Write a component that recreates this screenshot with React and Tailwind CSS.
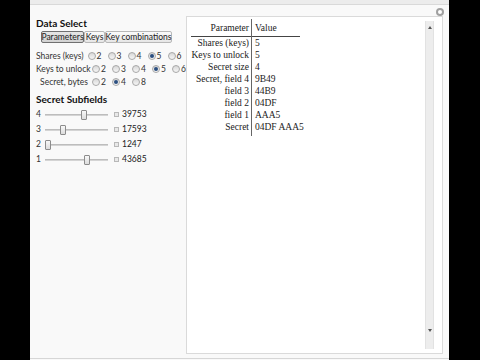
import React from "react";

const sans = { fontFamily: 'Lato, "Liberation Sans", sans-serif' };
const serif = { fontFamily: '"Liberation Serif", "Times New Roman", serif' };

const RADIOS = [
  { label: "Shares (keys)", opts: ["2", "3", "4", "5", "6"], sel: "5" },
  { label: "Keys to unlock", opts: ["2", "3", "4", "5", "6"], sel: "5" },
  { label: "Secret, bytes", opts: ["2", "4", "8"], sel: "4" },
];

const SLIDERS = [
  { label: "4", pos: 36, value: "39753" },
  { label: "3", pos: 15, value: "17593" },
  { label: "2", pos: 0, value: "1247" },
  { label: "1", pos: 39, value: "43685" },
];

const ROWS = [
  ["Shares (keys)", "5"],
  ["Keys to unlock", "5"],
  ["Secret size", "4"],
  ["Secret, field 4", "9B49"],
  ["field 3", "44B9"],
  ["field 2", "04DF"],
  ["field 1", "AAA5"],
  ["Secret", "04DF AAA5"],
];

function Radio({ on }) {
  return (
    <span className="w-[8px] h-[8px] shrink-0 rounded-full border border-[#a8a8a8] bg-gradient-to-b from-[#d8d8d8] to-[#f6f6f6] flex items-center justify-center">
      {on && <span className="w-[4px] h-[4px] rounded-full bg-[#2b4f80]" />}
    </span>
  );
}

function Slider({ label, pos, value }) {
  return (
    <div className="flex items-center h-[15px]">
      <span className="w-[9px] text-[8.5px] text-[#333]">{label}</span>
      <div className="relative w-[63px] h-[10px] flex items-center">
        <div className="w-full h-[2px] bg-[#d4d4d4] border-t border-[#bdbdbd]" />
        <div
          className="absolute top-0 w-[6px] h-[10px] rounded-[1px] border border-[#8c8c8c] bg-gradient-to-b from-[#f8f8f8] to-[#dcdcdc]"
          style={{ left: pos }}
        />
      </div>
      <span className="ml-[6px] w-[5px] h-[5px] border border-[#b8b8b8] bg-[#e8e8e8]" />
      <span className="ml-[3px] text-[8.5px] text-[#222]">{value}</span>
    </div>
  );
}

export default function App() {
  return (
    <div className="w-[480px] h-[360px] bg-black flex overflow-hidden">
      <div className="ml-[30px] w-[419px] h-full bg-[#f9f9f9] flex flex-col relative">
        <div className="h-[5px] bg-[#ececec] border-b border-[#d9d9d9]" />
        <span className="absolute top-[8px] right-[5px] w-[8px] h-[8px] rounded-full border-2 border-[#a0a0a0] bg-white" />
        <div className="flex flex-1 pt-[11px] pb-[4px] pr-[6px]">
          <div className="w-[156px] pl-[6px] pt-[1px]" style={sans}>
            <div className="text-[10px] font-bold text-[#111] leading-[12px]">Data Select</div>
            <div className="flex ml-[5px] mt-[2px] text-[8.5px] text-[#222] whitespace-nowrap">
              <span className="w-[43px] h-[12px] flex items-center justify-center border border-[#707070] bg-gradient-to-b from-[#e6e6e6] to-[#d2d2d2] rounded-[2px]">Parameters</span>
              <span className="w-[21px] h-[12px] flex items-center justify-center border border-[#b8b8b8] bg-gradient-to-b from-[#fbfbfb] to-[#e6e6e6] rounded-[2px]">Keys</span>
              <span className="w-[67px] h-[12px] flex items-center justify-center border border-[#b8b8b8] bg-gradient-to-b from-[#fbfbfb] to-[#e6e6e6] rounded-[2px]">Key combinations</span>
            </div>
            <div className="mt-[7px] flex flex-col gap-[1px]">
              {RADIOS.map((r) => (
                <div key={r.label} className="flex items-center h-[12px] text-[8.5px] text-[#333]">
                  <span className="w-[52px] text-right whitespace-nowrap">{r.label}</span>
                  <div className="flex ml-[4px]">
                    {r.opts.map((o) => (
                      <span key={o} className="w-[20px] flex items-center gap-[1px]">
                        <Radio on={o === r.sel} />
                        <span>{o}</span>
                      </span>
                    ))}
                  </div>
                </div>
              ))}
            </div>
            <div className="mt-[5px] text-[10px] font-bold text-[#111] leading-[12px]">Secret Subfields</div>
            <div className="mt-[2px] flex flex-col">
              {SLIDERS.map((s) => (
                <Slider key={s.label} {...s} />
              ))}
            </div>
          </div>
          <div className="flex-1 bg-white border border-[#dadada] flex justify-between">
            <div className="pl-[5px] pt-[2px]" style={serif}>
              <div className="flex text-[9.5px] leading-[12px] text-[#222]">
                <div className="flex flex-col items-end w-[60px] pr-[2px] border-r border-[#666]">
                  <span className="pb-[2px] pt-[3px]">Parameter</span>
                  <span className="w-[60px] border-t border-[#444] -mr-[2px]" />
                  {ROWS.map(([k]) => (
                    <span key={k} className="whitespace-nowrap">{k}</span>
                  ))}
                  <span className="h-[3px]" />
                </div>
                <div className="flex flex-col">
                  <span className="pb-[2px] pt-[3px] pl-[3px]">Value</span>
                  <span className="w-[48px] border-t border-[#444]" />
                  {ROWS.map(([k, v]) => (
                    <span key={k} className="whitespace-nowrap pl-[3px]">{v}</span>
                  ))}
                </div>
              </div>
            </div>
            <div className="w-[9px] mr-[8px] my-[4px] bg-[#ededed] border-x border-[#e2e2e2] flex flex-col items-center justify-between py-[5px]">
              <span className="w-0 h-0 border-x-[2px] border-x-transparent border-b-[3px] border-b-[#555]" />
              <span className="w-0 h-0 border-x-[2px] border-x-transparent border-t-[3px] border-t-[#555] mb-[12px]" />
            </div>
          </div>
        </div>
        <div className="h-[1px] bg-[#d6d6d6] mb-[1px]" />
      </div>
    </div>
  );
}
